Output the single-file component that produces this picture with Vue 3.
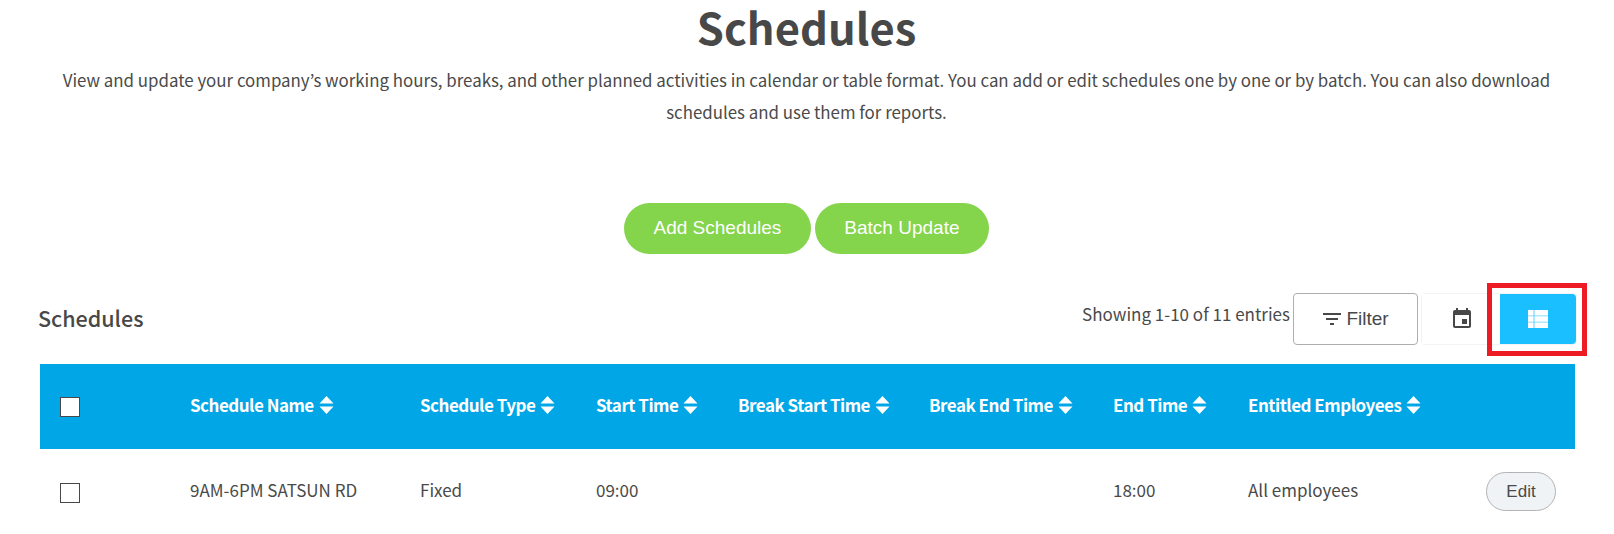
<script setup>
const columns = [
  { label: 'Schedule Name', value: '9AM-6PM SATSUN RD' },
  { label: 'Schedule Type', value: 'Fixed' },
  { label: 'Start Time', value: '09:00' },
  { label: 'Break Start Time', value: '' },
  { label: 'Break End Time', value: '' },
  { label: 'End Time', value: '18:00' },
  { label: 'Entitled Employees', value: 'All employees' }
]
</script>

<template>
  <main class="page">
    <h1 class="title">Schedules</h1>
    <p class="intro">View and update your company’s working hours, breaks, and other planned activities in calendar or table format. You can add or edit schedules one by one or by batch. You can also download schedules and use them for reports.</p>
    <div class="actions">
      <button class="pill">Add Schedules</button>
      <button class="pill">Batch Update</button>
    </div>
    <div class="toolbar">
      <h2 class="section">Schedules</h2>
      <div class="tools">
        <span class="count">Showing 1-10 of 11 entries</span>
        <button class="filter">
          <svg width="24" height="24" viewBox="0 0 24 24" fill="#484848"><path d="M10 18h4v-2h-4v2zM3 6v2h18V6H3zm3 7h12v-2H6v2z"/></svg>
          <span>Filter</span>
        </button>
        <div class="views">
          <button class="view cal">
            <svg width="24" height="24" viewBox="0 0 24 24" fill="#484848"><path d="M17 12h-5v5h5v-5zM16 1v2H8V1H6v2H5c-1.11 0-1.99.9-1.99 2L3 19c0 1.1.89 2 2 2h14c1.1 0 2-.9 2-2V5c0-1.1-.9-2-2-2h-1V1h-2zm3 18H5V8h14v11z"/></svg>
          </button>
          <button class="view active">
            <svg width="20" height="18" viewBox="0 0 20 18" fill="#fff"><rect width="20" height="18" opacity="0.3"/><path d="M0 0h5.500v5.500H0zM6.500 0H20v5.500H6.500zM0 6.250h5.500v5.500H0zM6.500 6.250H20v5.500H6.500zM0 12.500h5.500V18H0zM6.500 12.500H20V18H6.500z"/></svg>
          </button>
          <span class="marker"></span>
        </div>
      </div>
    </div>
    <table class="grid">
      <colgroup>
        <col class="c0" /><col class="c1" /><col class="c2" /><col class="c3" /><col class="c4" /><col class="c5" /><col class="c6" /><col />
      </colgroup>
      <thead>
        <tr>
          <th><span class="box head-box"></span></th>
          <th v-for="c in columns" :key="c.label">
            <span class="th-inner">{{ c.label }}
              <svg class="sort" width="15" height="20" viewBox="0 0 15 20" fill="#fff"><path d="M7.500 1 14.500 8.500H.5zM7.500 19 .5 11.500h14z"/></svg>
            </span>
          </th>
          <th></th>
        </tr>
      </thead>
      <tbody>
        <tr>
          <td class="box-cell"><span class="box"></span></td>
          <td v-for="c in columns" :key="c.label" class="text-cell">{{ c.value }}</td>
          <td class="edit-cell"><button class="edit">Edit</button></td>
        </tr>
      </tbody>
    </table>
  </main>
</template>

<style>
html, body { margin: 0; background: #fff; overflow: hidden; }
</style>

<style scoped>
.page {
  width: 1614px;
  height: 534px;
  overflow: hidden;
  box-sizing: border-box;
  padding: 0 39px 0 38px;
  font-family: "Noto Sans CJK JP", "Noto Sans", sans-serif;
  color: #4a4a4a;
}
.title {
  margin: 0;
  height: 58px;
  line-height: 54px;
  font-size: 43.5px;
  font-weight: 700;
  text-align: center;
  color: #484848;
}
.intro {
  margin: 6px 0 0;
  font-size: 16.87px;
  line-height: 32px;
  text-align: center;
}
.actions {
  display: flex;
  justify-content: center;
  gap: 4px;
  margin-top: 75px;
}
.pill {
  height: 51px;
  padding: 0 29.5px 2px;
  border: 0;
  border-radius: 26px;
  background: #84d44c;
  color: #fff;
  font: 19px "Liberation Sans", sans-serif;
}
.toolbar {
  display: flex;
  justify-content: space-between;
  align-items: center;
  margin-top: 38px;
  height: 53px;
}
.section {
  margin: 0 0 2px;
  font-size: 21.5px;
  font-weight: 500;
  color: #484848;
}
.tools {
  display: flex;
  align-items: center;
}
.count {
  font-size: 17px;
  margin: 0 3px 10px 0;
}
.filter {
  display: flex;
  align-items: center;
  justify-content: center;
  gap: 2px;
  width: 125px;
  height: 52px;
  padding: 0 2px 0 0;
  background: #fff;
  border: 1px solid #aeaeae;
  border-radius: 4px;
  color: #484848;
  font: 19px "Liberation Sans", sans-serif;
}
.views {
  position: relative;
  display: flex;
  margin-left: 3px;
  margin-right: -2px;
  border: 1px solid #f3f3f3;
  border-radius: 4px;
}
.view {
  display: flex;
  align-items: center;
  justify-content: center;
  width: 78px;
  height: 50px;
  padding: 0;
  border: 0;
  background: #fff;
}
.view.cal { padding-left: 2px; }
.view.active {
  width: 76px;
  background: #1abfff;
  border-radius: 0 4px 4px 0;
}
.marker {
  position: absolute;
  left: 65px;
  top: -11px;
  width: 90px;
  height: 63px;
  border: 5px solid #ed1c24;
}
.grid {
  width: 1535px;
  margin: 19px 0 0 2px;
  border-collapse: collapse;
  table-layout: fixed;
}
.c0 { width: 150px; }
.c1 { width: 230px; }
.c2 { width: 176px; }
.c3 { width: 142px; }
.c4 { width: 191px; }
.c5 { width: 184px; }
.c6 { width: 135px; }
th {
  height: 85px;
  padding: 0;
  background: #00a6e6;
  color: #fff;
  font-size: 17px;
  font-weight: 700;
  letter-spacing: -0.5px;
  text-align: left;
}
th:first-child, td:first-child { padding-left: 20px; }
.th-inner {
  display: inline-flex;
  align-items: center;
  gap: 5px;
  position: relative;
  top: -2px;
  white-space: nowrap;
}
td {
  box-sizing: border-box;
  height: 85px;
  padding: 0;
  font-size: 17px;
}
.text-cell { padding-bottom: 5px; }
.box-cell { padding-top: 3px; }
.box {
  display: block;
  width: 18px;
  height: 18px;
  background: #fff;
  border: 1px solid #484848;
}
.head-box { margin-top: 1px; }
.edit-cell { text-align: right; padding: 0 19px 0 0; }
.edit {
  width: 70px;
  height: 39px;
  border: 1px solid #b4b4b4;
  border-radius: 20px;
  background: #f0f3f5;
  color: #4a4a4a;
  font: 17px "Liberation Sans", sans-serif;
}
</style>
